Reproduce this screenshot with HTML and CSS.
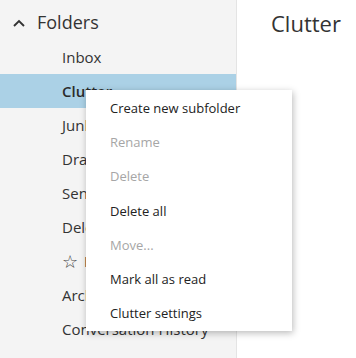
FILE: index.html
```html
<!DOCTYPE html>
<html>
<head>
<meta charset="utf-8">
<link rel="stylesheet" href="styles.css">
</head>
<body>
<div class="app">
  <nav class="pane">
    <div class="header">
      <svg class="chev" width="12" height="8" viewBox="0 0 12 8"><path d="M1 7 L6 2 L11 7" fill="none" stroke="#333" stroke-width="1.9"/></svg>
      <span>Folders</span>
    </div>
    <ul class="folders">
      <li>Inbox</li>
      <li class="sel">Clutter</li>
      <li>Junk Email</li>
      <li>Drafts</li>
      <li>Sent Items</li>
      <li>Deleted Items</li>
      <li><span class="star">☆</span>Important</li>
      <li>Archive</li>
      <li>Conversation History</li>
    </ul>
    <ul class="menu">
      <li>Create new subfolder</li>
      <li class="off">Rename</li>
      <li class="off">Delete</li>
      <li>Delete all</li>
      <li class="off">Move...</li>
      <li>Mark all as read</li>
      <li>Clutter settings</li>
    </ul>
  </nav>
  <main class="main">
    <h1>Clutter</h1>
  </main>
</div>
</body>
</html>
```
FILE: styles.css
```css
html, body { margin: 0; padding: 0; }
body {
  font-family: "Open Sans", "Noto Sans", sans-serif;
  color: #333;
  width: 356px;
  height: 358px;
  overflow: hidden;
  background: #fff;
}
.app { display: flex; height: 358px; }
.pane {
  position: relative;
  width: 236px;
  flex: none;
  background: #f4f4f4;
  border-right: 1px solid #e4e4e4;
}
.header {
  display: flex;
  align-items: center;
  height: 44px;
  padding-left: 13px;
  font-size: 18px;
  color: #333;
}
.chev { margin-right: 12px; margin-top: 1px; }
.folders { list-style: none; margin: 0; padding: 0; margin-top: -4px; }
.folders li {
  height: 34px;
  display: flex;
  align-items: center;
  padding-left: 62px;
  font-size: 15px;
  white-space: nowrap;
}
.folders li.sel { background: #abd1e6; font-weight: 600; color: #2b2b2b; }
.star { font-size: 18px; margin-right: 6px; color: #444; }
.menu {
  position: absolute;
  left: 86px;
  top: 90px;
  width: 206px;
  margin: 0;
  padding: 1px 0 0;
  list-style: none;
  background: #fff;
  box-shadow: 1px 2px 7px rgba(0,0,0,0.28);
  height: 241px;
  box-sizing: border-box;
}
.menu li {
  height: 34.2px;
  display: flex;
  align-items: center;
  padding-left: 24px;
  font-size: 13px;
  color: #222;
}
.menu li.off { color: #a6a6a6; }
.main { flex: 1; }
.main h1 {
  margin: 8px 0 0 34px;
  font-weight: 400;
  font-size: 22px;
  color: #333;
}
```
